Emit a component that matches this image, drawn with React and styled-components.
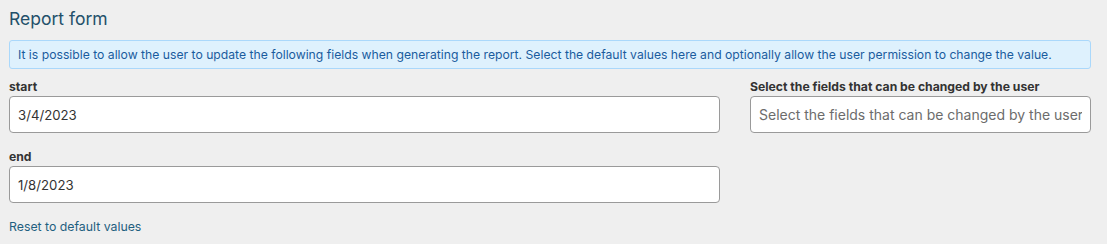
import React from "react";
import styled, { createGlobalStyle } from "styled-components";

const Global = createGlobalStyle`
  html, body { margin: 0; padding: 0; background: #efefef; }
  body { font-family: "Inter", "Noto Sans", sans-serif; }
  * { box-sizing: border-box; }
`;

const Page = styled.div`
  padding: 8px 16px 0 9px;
  width: 1107px;
  height: 244px;
`;

const Title = styled.h2`
  margin: 0 0 10px;
  font-size: 17.5px;
  font-weight: 400;
  line-height: 22px;
  color: #23506a;
`;

const Notice = styled.div`
  height: 29px;
  padding: 0 8px;
  display: flex;
  align-items: center;
  background: #def1fd;
  border: 1px solid #aad8fb;
  border-radius: 3px;
  color: #1a5c9e;
  font-size: 12.2px;
  white-space: nowrap;
  overflow: hidden;
`;

const Grid = styled.div`
  margin-top: 11px;
  display: grid;
  grid-template-columns: 711fr 341fr;
  column-gap: 30px;
  align-items: start;
`;

const Column = styled.div`
  display: flex;
  flex-direction: column;
  gap: 17px;
`;

const Field = styled.div`
  display: flex;
  flex-direction: column;
`;

const Label = styled.label`
  font-size: 12.2px;
  font-weight: 700;
  color: #333;
  line-height: 14px;
  margin-bottom: 2px;
  white-space: nowrap;
`;

const Input = styled.input`
  height: 37px;
  width: 100%;
  padding: 0 8px;
  border: 1px solid #9a9a9a;
  border-radius: 4px;
  background: #fff;
  font-family: inherit;
  font-size: 13.2px;
  color: #333;
  outline: none;
  &::placeholder { color: #6c6c6c; font-size: 14px; }
`;

const ResetLink = styled.a`
  font-size: 12.3px;
  line-height: 14px;
  color: #1f6080;
  text-decoration: none;
  cursor: pointer;
`;

export default function App() {
  return (
    <>
      <Global />
      <Page>
        <Title>Report form</Title>
        <Notice>
          It is possible to allow the user to update the following fields when generating the report. Select the default values here and optionally allow the user permission to change the value.
        </Notice>
        <Grid>
          <Column>
            <Field>
              <Label>start</Label>
              <Input defaultValue="3/4/2023" />
            </Field>
            <Field>
              <Label>end</Label>
              <Input defaultValue="1/8/2023" />
            </Field>
            <ResetLink>Reset to default values</ResetLink>
          </Column>
          <Column>
            <Field>
              <Label>Select the fields that can be changed by the user</Label>
              <Input placeholder="Select the fields that can be changed by the user" />
            </Field>
          </Column>
        </Grid>
      </Page>
    </>
  );
}
